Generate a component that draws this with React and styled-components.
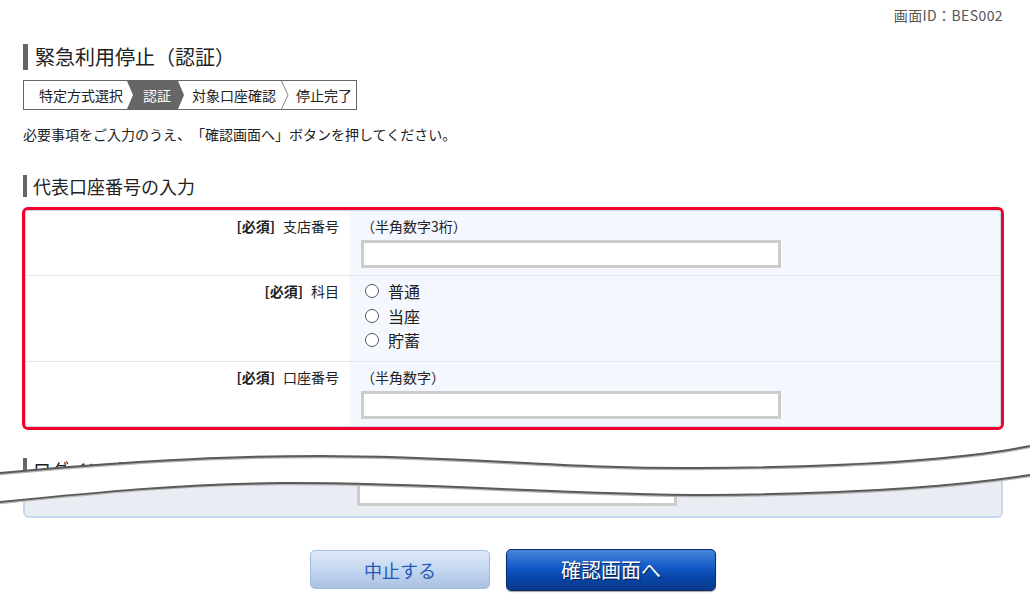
import React from 'react';
import styled, { createGlobalStyle } from 'styled-components';

const GlobalStyle = createGlobalStyle`
  body {
    margin: 0;
    background: #fff;
    font-family: "Noto Sans CJK JP", "Liberation Sans", sans-serif;
    color: #222;
    text-spacing-trim: space-all;
  }
`;

const Page = styled.div`
  position: relative;
  width: 1030px;
  height: 605px;
  box-sizing: border-box;
  padding: 0 27px 0 23px;
  overflow: hidden;
`;

const ScreenId = styled.div`
  padding-top: 5px;
  text-align: right;
  font-size: 14px;
  letter-spacing: 0.4px;
  line-height: 20px;
  color: #555;
`;

const PageTitle = styled.h1`
  margin: 19px 0 0;
  border-left: 5px solid #666;
  padding-left: 7px;
  font-size: 20px;
  font-weight: normal;
  line-height: 26px;
  color: #222;
`;

const Steps = styled.div`
  margin-top: 10px;
  display: inline-flex;
  align-items: stretch;
  height: 30px;
  box-sizing: border-box;
  border: 1px solid #666;
  background: #fff;
`;

const Step = styled.div`
  display: flex;
  align-items: center;
  font-size: 14px;
  color: ${p => (p.$active ? '#fff' : '#222')};
  background: ${p => (p.$active ? '#666' : 'transparent')};
  padding: ${p => p.$pad};
  clip-path: ${p =>
    p.$active ? 'polygon(0 0, 51px 0, 100% 50%, 51px 100%, 0 100%, 6px 50%)' : 'none'};
`;

const Chevron = styled.svg`
  width: 8px;
  height: 28px;
  margin-left: 5px;
  flex: none;
`;

const Intro = styled.p`
  margin: 14px 0 0;
  font-size: 14px;
  line-height: 20px;
`;

const SectionTitle = styled.h2`
  margin: ${p => p.$top || '31px'} 0 0;
  border-left: 4px solid #666;
  padding-left: 6px;
  font-size: 18px;
  font-weight: normal;
  line-height: 22px;
  height: 22px;
  color: #222;
`;

const Highlight = styled.div`
  margin: 10px -1px 0;
  border: 3px solid #f3002b;
  border-radius: 6px;
`;

const FormTable = styled.div`
  border: 1px solid #c9d7ea;
  border-radius: 4px;
  overflow: hidden;
`;

const Row = styled.div`
  display: grid;
  grid-template-columns: 324px 1fr;
  & + & {
    border-top: 1px solid #e3e8f0;
  }
`;

const LabelCell = styled.div`
  background: #fff;
  text-align: right;
  padding: ${p => (p.$tall ? '3px' : '5px')} 11px 0 0;
  font-size: 14px;
  line-height: ${p => (p.$tall ? '24px' : '20px')};
  color: #222;
`;

const Req = styled.b`
  margin-right: 8px;
`;

const ValueCell = styled.div`
  background: #f4f7fd;
  padding: ${p => (p.$list ? '3px 11px 8px' : '5px 11px 7px')};
`;

const Hint = styled.div`
  font-size: 14px;
  line-height: 20px;
  color: #222;
`;

const TextInput = styled.div`
  width: ${p => p.$w || '420px'};
  height: ${p => p.$h || '28px'};
  margin-top: ${p => p.$mt || '4px'};
  box-sizing: border-box;
  border: 3px solid #ccc;
  background: #fff;
`;

const RadioRow = styled.label`
  display: flex;
  align-items: center;
  gap: 9px;
  height: 24.5px;
  padding-left: 4px;
  font-size: 16px;
  color: #222;
`;

const RadioDot = styled.span`
  width: 12px;
  height: 12px;
  border: 1px solid #555;
  border-radius: 50%;
  background: #fff;
`;

const CutBox = styled.div`
  box-sizing: border-box;
  height: 38px;
  border: 2px solid #c3d7ef;
  border-top: none;
  border-radius: 0 0 6px 6px;
  background: #e9edf3;
  padding-left: 332px;
`;

const Actions = styled.div`
  margin-top: 31px;
  display: flex;
  justify-content: center;
  align-items: center;
  gap: 16px;
`;

const Button = styled.button`
  box-sizing: border-box;
  font-family: inherit;
  border-radius: 5px;
  cursor: pointer;
  width: ${p => (p.$primary ? '210px' : '180px')};
  height: ${p => (p.$primary ? '42px' : '39px')};
  font-size: ${p => (p.$primary ? '20px' : '18px')};
  color: ${p => (p.$primary ? '#fff' : '#2459b8')};
  border: 1px solid ${p => (p.$primary ? '#0a2c68' : '#a2bbdc')};
  text-shadow: ${p => (p.$primary ? '1px 1px 1px rgba(0,0,0,0.6)' : 'none')};
  background: ${p =>
    p.$primary
      ? 'linear-gradient(#4786dc 0%, #1258c6 45%, #0845a8 70%, #0a3a8c 100%)'
      : 'linear-gradient(#dfeafa 0%, #c4d6ef 50%, #a9c1e1 100%)'};
  box-shadow: ${p => (p.$primary ? '0 1px 1px rgba(0,0,0,0.35)' : 'none')};
`;

const Tear = styled.svg`
  position: absolute;
  left: 0;
  top: 430px;
  width: 1030px;
  height: 90px;
  pointer-events: none;
`;

const topWave = 'M0,473 C110,463 210,456 320,456 C470,456 560,469 700,468 C850,467 960,460 1030,446';
const bottomWave = 'M0,502 C100,492 180,484 280,483 C430,482 560,495 710,495 C860,494 960,486 1030,475';
const tearFill =
  topWave +
  ' L1030,475 C960,486 860,494 710,495 C560,495 430,482 280,483 C180,484 100,492 0,502 Z';

export default function App() {
  return (
    <>
      <GlobalStyle />
      <Page>
        <ScreenId>画面ID：BES002</ScreenId>
        <PageTitle>緊急利用停止（認証）</PageTitle>
        <Steps>
          <Step $pad="0 4px 0 15px">特定方式選択</Step>
          <Step $active $pad="0 13px 0 16px">認証</Step>
          <Step $pad="0 0 0 8px">対象口座確認</Step>
          <Chevron viewBox="0 0 8 28">
            <polyline points="0.5,0 7,14 0.5,28" fill="none" stroke="#8a8a8a" strokeWidth="1" />
          </Chevron>
          <Step $pad="0 4px 0 7px">停止完了</Step>
        </Steps>
        <Intro>必要事項をご入力のうえ、「確認画面へ」ボタンを押してください。</Intro>

        <SectionTitle>代表口座番号の入力</SectionTitle>
        <Highlight>
          <FormTable>
            <Row>
              <LabelCell><Req>[必須]</Req>支店番号</LabelCell>
              <ValueCell>
                <Hint>（半角数字3桁）</Hint>
                <TextInput />
              </ValueCell>
            </Row>
            <Row>
              <LabelCell $tall><Req>[必須]</Req>科目</LabelCell>
              <ValueCell $list>
                <RadioRow><RadioDot />普通</RadioRow>
                <RadioRow><RadioDot />当座</RadioRow>
                <RadioRow><RadioDot />貯蓄</RadioRow>
              </ValueCell>
            </Row>
            <Row>
              <LabelCell><Req>[必須]</Req>口座番号</LabelCell>
              <ValueCell>
                <Hint>（半角数字）</Hint>
                <TextInput />
              </ValueCell>
            </Row>
          </FormTable>
        </Highlight>

        <SectionTitle $top="28px">ログインパスワードの入力</SectionTitle>
        <CutBox>
          <TextInput $w="320px" $h="26px" $mt="0" />
        </CutBox>

        <Actions>
          <Button>中止する</Button>
          <Button $primary>確認画面へ</Button>
        </Actions>

        <Tear viewBox="0 430 1030 90" preserveAspectRatio="none">
          <path d={tearFill} fill="#fff" />
          <path d={topWave} fill="none" stroke="#b5b5b5" strokeWidth="2" transform="translate(0,1.2)" />
          <path d={bottomWave} fill="none" stroke="#b5b5b5" strokeWidth="2" transform="translate(0,1.2)" />
          <path d={topWave} fill="none" stroke="#5a5a5a" strokeWidth="2" />
          <path d={bottomWave} fill="none" stroke="#5a5a5a" strokeWidth="2" />
        </Tear>
      </Page>
    </>
  );
}
